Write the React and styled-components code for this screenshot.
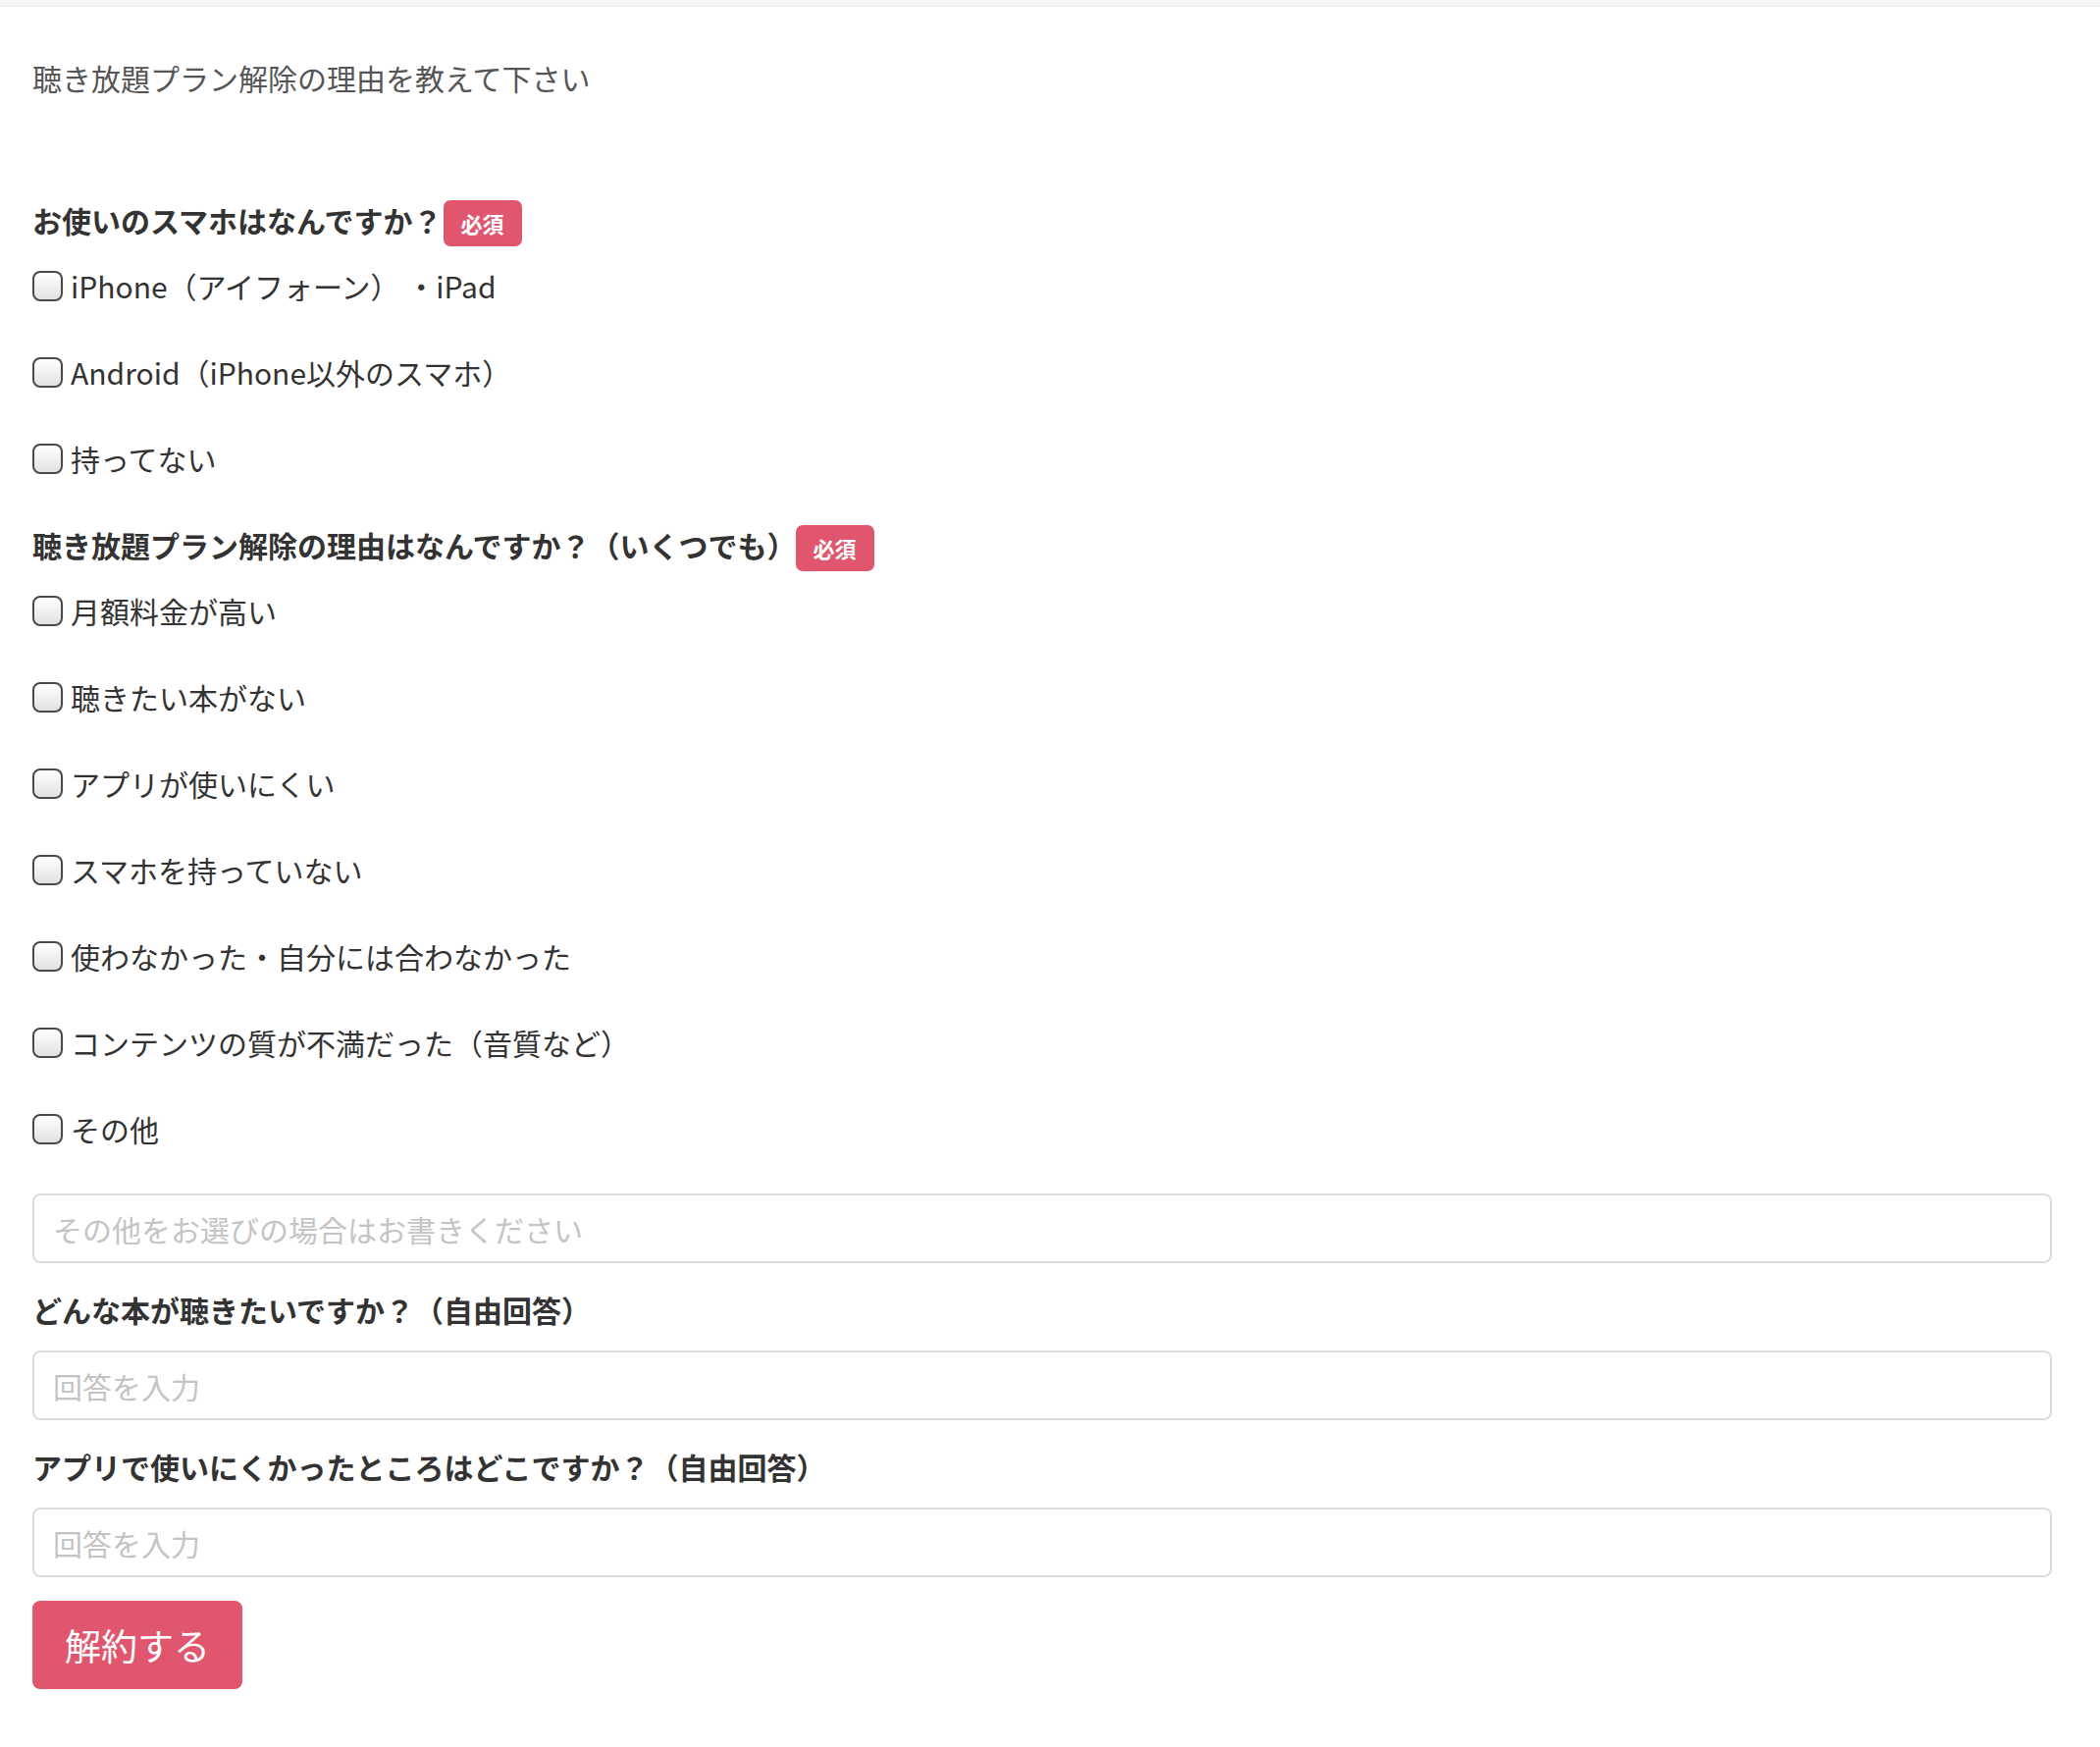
import React from "react";
import styled, { createGlobalStyle } from "styled-components";

const GlobalStyle = createGlobalStyle`
  html, body {
    margin: 0;
    padding: 0;
    background: #fff;
  }
  body {
    font-family: "Noto Sans CJK JP", "Noto Sans", sans-serif;
    color: #333;
  }
  * {
    box-sizing: border-box;
  }
`;

const devices = [
  "iPhone（アイフォーン） ・iPad",
  "Android（iPhone以外のスマホ）",
  "持ってない",
];

const reasons = [
  "月額料金が高い",
  "聴きたい本がない",
  "アプリが使いにくい",
  "スマホを持っていない",
  "使わなかった・自分には合わなかった",
  "コンテンツの質が不満だった（音質など）",
  "その他",
];

const App = () => {
  return (
    <Page>
      <GlobalStyle />
      <TopBar />
      <Form>
        <Title>聴き放題プラン解除の理由を教えて下さい</Title>
        <Question>
          お使いのスマホはなんですか？<Badge $gap="1px">必須</Badge>
        </Question>
        {devices.map((d) => (
          <Option key={d}>
            <Check type="checkbox" />
            <span>{d}</span>
          </Option>
        ))}
        <Question>
          聴き放題プラン解除の理由はなんですか？（いくつでも）
          <Badge $gap="-1px">必須</Badge>
        </Question>
        {reasons.map((r) => (
          <Option key={r}>
            <Check type="checkbox" />
            <span>{r}</span>
          </Option>
        ))}
        <Input placeholder="その他をお選びの場合はお書きください" />
        <Question $free>どんな本が聴きたいですか？（自由回答）</Question>
        <Input placeholder="回答を入力" />
        <Question $free>
          アプリで使いにくかったところはどこですか？（自由回答）
        </Question>
        <Input placeholder="回答を入力" />
        <Submit type="button">解約する</Submit>
      </Form>
    </Page>
  );
};

export default App;

const Page = styled.div`
  width: 100%;
  min-height: 1780px;
`;
const TopBar = styled.div`
  height: 7px;
  background: #f5f5f5;
  border-bottom: 1px solid #eeeeee;
`;
const Form = styled.div`
  padding: 50px 49px 40px 33px;
  font-size: 30px;
  line-height: 45px;
`;
const Title = styled.div`
  color: #555;
  margin-bottom: 100px;
`;
const Question = styled.div`
  font-weight: 700;
  color: #333;
  display: flex;
  align-items: center;
  height: 45px;
  margin-top: ${(p) => (p.$free ? "25px" : "0")};
  margin-bottom: ${(p) => (p.$free ? "19px" : "22px")};
`;
const Badge = styled.span`
  display: inline-flex;
  align-items: center;
  justify-content: center;
  width: 80px;
  height: 47px;
  margin-left: ${(p) => p.$gap};
  margin-top: 5px;
  border-radius: 7px;
  background: #e0566e;
  color: #fff;
  font-size: 22px;
  font-weight: 700;
`;
const Option = styled.label`
  display: flex;
  align-items: center;
  height: 45px;
  margin-bottom: 43px;
  color: #333;
`;
const Check = styled.input`
  appearance: none;
  -webkit-appearance: none;
  width: 31px;
  height: 31px;
  margin: 0 8px 0 0;
  border: 2px solid #4a4a4a;
  border-radius: 8px;
  background: linear-gradient(#ffffff, #e2e2e2);
  flex-shrink: 0;
`;
const Input = styled.input`
  display: block;
  width: 100%;
  height: 71px;
  padding: 0 19px;
  border: 2px solid #dcdcdc;
  border-radius: 8px;
  font-family: "Noto Sans CJK JP", "Noto Sans", sans-serif;
  font-size: 30px;
  color: #333;
  outline: none;
  &::placeholder {
    color: #c4c4c4;
  }
`;
const Submit = styled.button`
  display: block;
  margin-top: 24px;
  width: 214px;
  height: 90px;
  border: none;
  border-radius: 8px;
  background: #e0566e;
  color: #fff;
  font-family: "Noto Sans CJK JP", "Noto Sans", sans-serif;
  font-size: 37px;
  font-weight: 400;
`;
